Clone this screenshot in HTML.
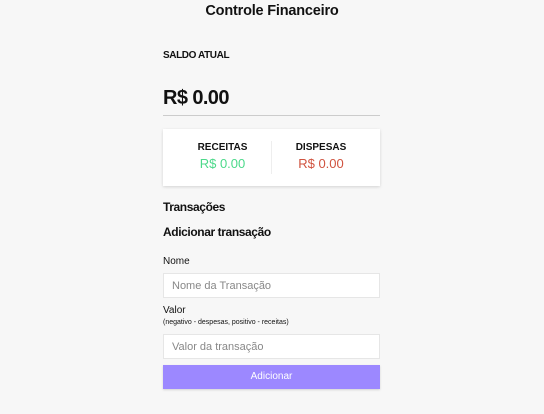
<!DOCTYPE html>
<html><head><style>
*{box-sizing:border-box;margin:0;padding:0}
body{width:544px;height:414px;background:#f7f7f7;font-family:"Liberation Sans",sans-serif;color:#111;position:relative;overflow:hidden}
.a{position:absolute}
h1{position:absolute;left:0;width:544px;top:1px;text-align:center;font-size:14.5px;font-weight:bold;line-height:20px;letter-spacing:-0.2px}
.in{position:absolute;left:163px;width:217px;height:25px;background:#fff;border:1px solid #e6e6e6;font-size:11px;color:#888;padding-left:8px;line-height:24px}
</style></head><body>
<h1>Controle Financeiro</h1>
<div class="a" style="left:163px;top:50px;font-size:10px;font-weight:bold;letter-spacing:-0.4px">SALDO ATUAL</div>
<div class="a" style="left:163px;top:87px;font-size:20px;font-weight:bold;letter-spacing:-0.6px">R$ 0.00</div>
<div class="a" style="left:163px;top:115px;width:217px;height:1px;background:#ccc"></div>
<div class="a" style="left:163px;top:129px;width:217px;height:57px;background:#fff;box-shadow:0 1px 3px rgba(0,0,0,.15)"></div>
<div class="a" style="left:271px;top:141px;width:1px;height:33px;background:#eee"></div>
<div class="a" style="left:163px;width:119px;top:142px;text-align:center;font-size:10px;font-weight:bold">RECEITAS</div>
<div class="a" style="left:163px;width:119px;top:156px;text-align:center;font-size:13px;color:#4cd98a">R$ 0.00</div>
<div class="a" style="left:262px;width:118px;top:142px;text-align:center;font-size:10px;font-weight:bold">DISPESAS</div>
<div class="a" style="left:262px;width:118px;top:156px;text-align:center;font-size:13px;color:#d0533f">R$ 0.00</div>
<div class="a" style="left:163px;top:200px;font-size:12px;font-weight:bold;letter-spacing:-0.4px">Transações</div>
<div class="a" style="left:163px;top:225px;font-size:12px;font-weight:bold;letter-spacing:-0.4px">Adicionar transação</div>
<div class="a" style="left:163px;top:256px;font-size:10px">Nome</div>
<div class="in" style="top:273px">Nome da Transação</div>
<div class="a" style="left:163px;top:305px;font-size:10px">Valor</div>
<div class="a" style="left:163px;top:319px;font-size:7px">(negativo - despesas, positivo - receitas)</div>
<div class="in" style="top:334px">Valor da transação</div>
<div class="a" style="left:163px;top:365px;width:217px;height:24px;background:#9c88ff;color:#fff;font-size:10px;text-align:center;line-height:24px;box-shadow:0 1px 2px rgba(0,0,0,.15)">Adicionar</div>
</body></html>
